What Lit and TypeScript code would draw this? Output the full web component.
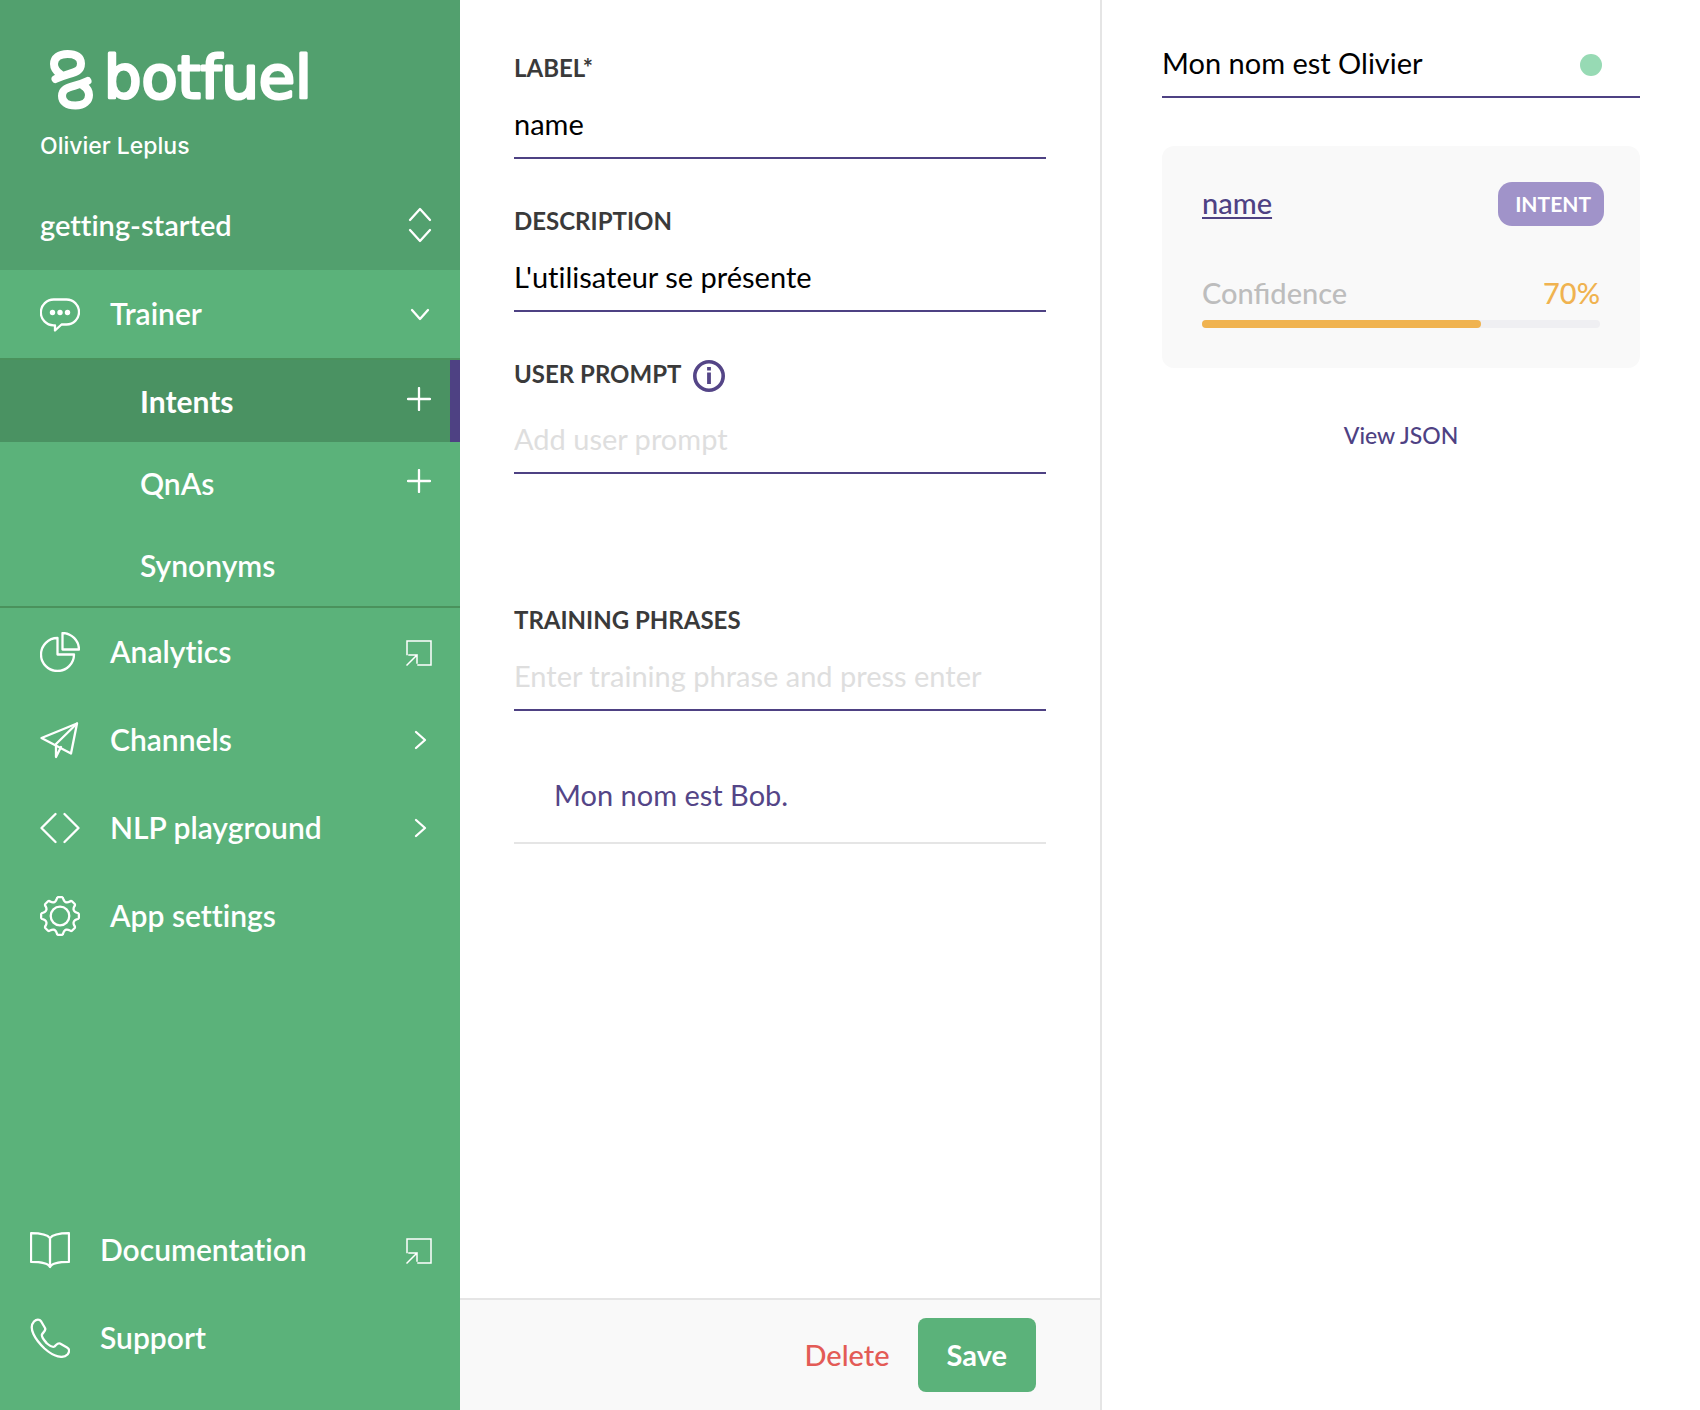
import { LitElement, html, svg, css, nothing, type TemplateResult } from "lit";
import { customElement, state } from "lit/decorators.js";

/** Outline of an eight-toothed cog centred on (20, 20). */
function cogPath(): string {
  const at = (radius: number, degrees: number) => {
    const a = ((degrees - 90) * Math.PI) / 180;
    return `${(20 + radius * Math.cos(a)).toFixed(2)} ${(20 + radius * Math.sin(a)).toFixed(2)}`;
  };
  let d = `M${at(19, -6)}`;
  for (let k = 0; k < 8; k++) {
    const a = k * 45;
    d += `L${at(19, a + 6)}Q${at(18.8, a + 10)} ${at(17, a + 11.5)}`;
    d += `Q${at(15.6, a + 14)} ${at(15, a + 20)}L${at(15, a + 25)}`;
    d += `Q${at(15.6, a + 31)} ${at(17, a + 33.5)}Q${at(18.8, a + 35)} ${at(19, a + 39)}`;
  }
  return d + "Z";
}

const icons: Record<string, TemplateResult> = {
  chat: svg`<path d="M14 5.5h12.5a12.5 12.5 0 0 1 0 25H21.5L15 36.5V31.3H13.5A12.7 12.7 0 0 1 14 5.5z"/>
    <g fill="currentColor" stroke="none"><circle cx="12.5" cy="18.5" r="2.7"/><circle cx="20" cy="18.5" r="2.7"/><circle cx="27.5" cy="18.5" r="2.7"/></g>`,
  pie: svg`<path d="M17.5 6A16.5 16.5 0 1 0 34 22.5H17.5z"/><path d="M22.5 1A16.8 16.8 0 0 1 39 17.5H22.5z"/>`,
  plane: svg`<path d="M37 3.5 1.5 18 31 33.5z"/><path d="M37 3.5 16 24V37L21 27"/>`,
  code: svg`<path d="M15.5 6 1.5 20l14 14M24.5 6l14 14-14 14"/>`,
  cog: svg`<path d=${cogPath()}/><circle cx="20" cy="20" r="9.3"/>`,
  book: svg`<path d="M1 3.2C8 3.2 17 3.8 20 8.2 23 3.8 32 3.2 39 3.2V31.8C32 31.8 22 32.3 20 37 18 32.3 8 31.8 1 31.8zM20 8.2V37"/>`,
  phone: svg`<path d="M4 3.5C6.5 1 9.5 1 11.2 3.5L15 10C16.5 12.8 13 14 12 16.5 11 19 14 22 17 25.5 20.5 28.5 22.5 29.5 24.5 28.5 26.5 27 27.5 24.5 30 25.5L37 29.5C40.5 31.5 39 34.5 37.5 36.5 33 41 24 39 14.5 30.5 5 21.5-2 10 4 3.5z"/>`,
  external: svg`<path stroke-width="1.5" d="M1 14.5V1H25V25H12M1 25 11 15M3 15H11V23"/>`,
  plus: svg`<path d="M12 1v22M1 12h22"/>`,
  down: svg`<path d="M4 8l8 9 8-9"/>`,
  right: svg`<path d="M8 4l9 8-9 8"/>`,
  updown: svg`<path d="M2 13 12 2l10 11M2 23 12 34l10-11"/>`,
};

function icon(name: string, size: "large" | "small" | "box" | "tall") {
  const boxes = { large: "0 0 40 40", small: "0 0 24 24", box: "0 0 26 26", tall: "0 0 24 36" };
  return html`<svg class="icon ${size}" viewBox=${boxes[size]} stroke-width="2.3" aria-hidden="true">${icons[name]}</svg>`;
}

interface NavItem {
  icon: string;
  text: string;
  mark?: "down" | "right" | "external";
}

const mainItems: NavItem[] = [
  { icon: "pie", text: "Analytics", mark: "external" },
  { icon: "plane", text: "Channels", mark: "right" },
  { icon: "code", text: "NLP playground", mark: "right" },
  { icon: "cog", text: "App settings" },
];
const helpItems: NavItem[] = [
  { icon: "book", text: "Documentation", mark: "external" },
  { icon: "phone", text: "Support" },
];
const trainerItems = [
  { text: "Intents", add: true, active: true },
  { text: "QnAs", add: true, active: false },
  { text: "Synonyms", add: false, active: false },
];

@customElement("bot-sidebar")
class BotSidebar extends LitElement {
  static styles = css`
    :host {
      display: flex;
      flex-direction: column;
      background: #5bb27a;
      color: #fff;
      font: 600 30px/36px Lato, "Liberation Sans", sans-serif;
      font-variant-ligatures: none;
    }
    .head {
      box-sizing: border-box;
      height: 270px;
      padding: 38px 26px 0 40px;
      background: #52a06e;
    }
    .logo {
      display: block;
      width: 300px;
      height: 84px;
    }
    .wordmark {
      font: 400 59px "DejaVu Sans", sans-serif;
      font-variant-ligatures: none;
    }
    .user {
      margin: 10px 0 0;
      font: 500 23px/28px Inter, "Liberation Sans", sans-serif;
    }
    .switcher {
      display: flex;
      justify-content: space-between;
      align-items: center;
      width: 100%;
      margin-top: 47px;
      padding: 0 2px 0 0;
      border: 0;
      background: none;
      color: inherit;
      font: inherit;
      font-size: 29px;
      font-variant-ligatures: none;
    }
    .row {
      display: flex;
      align-items: center;
      height: 88px;
      padding: 0 28px 0 40px;
      color: inherit;
      text-decoration: none;
    }
    .row > .large {
      margin-right: 30px;
    }
    .text {
      flex: 1;
      padding-bottom: 2px;
    }
    .group {
      margin: 0;
      padding: 0;
      list-style: none;
      border: solid #4a925c;
      border-width: 2px 0;
    }
    .sub {
      display: flex;
      align-items: center;
      height: 82px;
      box-sizing: border-box;
      padding: 0 29px 0 140px;
    }
    .sub.active {
      border-right: 10px solid #4e4183;
      padding-right: 19px;
      background: #4a9262;
      font-weight: 700;
    }
    .sub a {
      flex: 1;
      color: inherit;
      text-decoration: none;
    }
    .add {
      display: flex;
      padding: 0 0 4px;
      border: 0;
      background: none;
      color: inherit;
    }
    .help {
      margin-top: auto;
      padding-bottom: 28px;
    }
    .help .row {
      padding-left: 30px;
    }
    .icon {
      flex: none;
      fill: none;
      stroke: currentColor;
      stroke-linecap: round;
      stroke-linejoin: round;
    }
    .large {
      width: 40px;
      height: 40px;
    }
    .small {
      width: 24px;
      height: 24px;
    }
    .box {
      width: 26px;
      height: 26px;
      margin-top: 2px;
      stroke-linecap: square;
      stroke-linejoin: miter;
    }
    .tall {
      width: 24px;
      height: 36px;
    }
  `;

  private row(item: NavItem) {
    return html`<a class="row" href="#">
      ${icon(item.icon, "large")}<span class="text">${item.text}</span>
      ${item.mark ? icon(item.mark, item.mark === "external" ? "box" : "small") : nothing}
    </a>`;
  }

  render() {
    return html`
      <header class="head">
        <svg class="logo" viewBox="0 -10 300 84" role="img" aria-label="botfuel">
          <g fill="none" stroke="#fff" stroke-width="8" stroke-linecap="round" stroke-linejoin="round">
            <path d="M15.5 31C30 24 41 26 41 15.5 41 9 36 6 27.5 6 19 6 14 10 14 16 14 20 16 23 20 26"/>
            <path d="M47.5 33C33 40 22 38 22 48 22 54 27 57.5 35.5 57.5 44 57.5 49 53 49 47 49 43 47 40 43 37.5"/>
          </g>
          <text class="wordmark" x="64" y="50" fill="#fff" stroke="#fff" stroke-width="3" stroke-linejoin="round">botfuel</text>
        </svg>
        <p class="user">Olivier Leplus</p>
        <button class="switcher" type="button"><span>getting-started</span>${icon("updown", "tall")}</button>
      </header>
      <nav aria-label="Main">
        ${this.row({ icon: "chat", text: "Trainer", mark: "down" })}
        <ul class="group">
          ${trainerItems.map(
            (item) => html`<li class="sub ${item.active ? "active" : ""}">
              <a href="#">${item.text}</a>
              ${item.add
                ? html`<button class="add" type="button" aria-label="Add ${item.text}">${icon("plus", "small")}</button>`
                : nothing}
            </li>`
          )}
        </ul>
        ${mainItems.map((item) => this.row(item))}
      </nav>
      <nav class="help" aria-label="Help">${helpItems.map((item) => this.row(item))}</nav>
    `;
  }
}

@customElement("intent-form")
class IntentForm extends LitElement {
  static styles = css`
    :host {
      display: flex;
      flex-direction: column;
      font: 400 29px/36px Lato, "Liberation Sans", sans-serif;
    }
    form {
      display: flex;
      flex: 1;
      flex-direction: column;
    }
    .fields {
      flex: 1;
      padding: 52px 54px 0;
    }
    .field {
      display: block;
      margin-bottom: 46px;
    }
    .field.wide {
      margin-bottom: 130px;
    }
    .caption {
      display: flex;
      align-items: center;
      gap: 12px;
      height: 32px;
      color: #3a3a3a;
      font-weight: 700;
      font-size: 24px;
    }
    .tip {
      width: 32px;
      height: 32px;
      margin-top: 4px;
      padding: 0;
      border: 0;
      background: none;
    }
    .tip svg {
      display: block;
    }
    input {
      display: block;
      box-sizing: border-box;
      width: 100%;
      height: 75px;
      padding: 6px 0 0;
      border: 0;
      border-bottom: 2px solid #4e4183;
      border-radius: 0;
      outline: 0;
      background: none;
      color: #000;
      font: inherit;
      font-variant-ligatures: none;
    }
    .tall input {
      height: 84px;
      padding-top: 14px;
    }
    input::placeholder {
      color: #dedede;
      opacity: 1;
    }
    .phrases {
      margin: 0;
      padding: 0;
      list-style: none;
    }
    .phrase {
      padding: 20px 40px 29px;
      border-bottom: 2px solid #e5e5e5;
      color: #544587;
    }
    .actions {
      display: flex;
      justify-content: flex-end;
      gap: 28px;
      padding: 18px 64px 18px 0;
      border-top: 2px solid #e5e5e5;
      background: #f9f9f9;
    }
    .actions button {
      height: 74px;
      padding: 0;
      border: 0;
      background: none;
      color: #e35b56;
      font: inherit;
      font-weight: 500;
    }
    .actions .save {
      padding: 0 29px;
      border-radius: 8px;
      background: #5bb27a;
      color: #fff;
      font-weight: 700;
    }
  `;

  @state() private phrases = ["Mon nom est Bob."];

  render() {
    return html`<form @submit=${(e: Event) => e.preventDefault()}>
      <div class="fields">
        <div class="field">
          <label class="caption" for="label">LABEL*</label>
          <input id="label" type="text" .value=${"name"} />
        </div>
        <div class="field">
          <label class="caption" for="description">DESCRIPTION</label>
          <input id="description" type="text" .value=${"L'utilisateur se présente"} />
        </div>
        <div class="field tall wide">
          <div class="caption">
            <label for="prompt">USER PROMPT</label>
            <button class="tip" type="button" aria-label="About user prompts">
              <svg viewBox="0 0 32 32" width="32" height="32" fill="none" stroke="#544587">
                <circle cx="16" cy="16" r="14.2" stroke-width="3.6" />
                <path d="M16 12.5v11.5M16 7v3.6" stroke-width="3.8" />
              </svg>
            </button>
          </div>
          <input id="prompt" type="text" placeholder="Add user prompt" />
        </div>
        <div class="field">
          <label class="caption" for="phrase">TRAINING PHRASES</label>
          <input id="phrase" type="text" placeholder="Enter training phrase and press enter" />
        </div>
        <ul class="phrases">
          ${this.phrases.map((p) => html`<li class="phrase">${p}</li>`)}
        </ul>
      </div>
      <footer class="actions">
        <button type="button">Delete</button>
        <button class="save" type="submit">Save</button>
      </footer>
    </form>`;
  }
}

@customElement("intent-preview")
class IntentPreview extends LitElement {
  static styles = css`
    :host {
      display: block;
      box-sizing: border-box;
      padding: 24px 60px;
      border-left: 2px solid #e5e5e5;
      font: 400 29px/36px Lato, "Liberation Sans", sans-serif;
    }
    .query {
      display: flex;
      align-items: center;
      box-sizing: border-box;
      height: 74px;
      padding: 6px 38px 0 0;
      border-bottom: 2px solid #4e4183;
    }
    .query input {
      flex: 1;
      min-width: 0;
      padding: 0;
      border: 0;
      outline: 0;
      background: none;
      color: #000;
      font: inherit;
    }
    .dot {
      width: 22px;
      height: 22px;
      margin-top: 4px;
      border-radius: 50%;
      background: #97dab4;
    }
    .card {
      margin: 48px 0 49px;
      padding: 36px 40px 40px;
      border-radius: 12px;
      background: #f9f9f9;
      font-weight: 500;
    }
    .line {
      display: flex;
      justify-content: space-between;
      align-items: center;
    }
    .name {
      padding-bottom: 2px;
      color: #4e4183;
      text-decoration: underline 2px;
      text-underline-offset: 3px;
    }
    .badge {
      margin-right: -4px;
      padding: 0 13px 0 17px;
      border-radius: 14px;
      background: #a093c9;
      color: #fff;
      font-weight: 700;
      font-size: 21px;
      line-height: 44px;
    }
    .score {
      margin-top: 49px;
      color: #bdbdbd;
    }
    .value {
      color: #f0b350;
    }
    .track {
      height: 8px;
      margin-top: 9px;
      border-radius: 4px;
      background: #efeff2;
    }
    .fill {
      height: 8px;
      border-radius: 4px;
      background: #f0b350;
    }
    .json {
      display: block;
      margin: 0 auto;
      padding: 0;
      border: 0;
      background: none;
      color: #4e4183;
      font: inherit;
      font-weight: 500;
      font-size: 23px;
    }
  `;

  @state() private confidence = 70;

  render() {
    return html`
      <div class="query">
        <input type="text" aria-label="Test phrase" .value=${"Mon nom est Olivier"} />
        <span class="dot"></span>
      </div>
      <section class="card">
        <div class="line"><a class="name" href="#">name</a><span class="badge">INTENT</span></div>
        <div class="line score"><span>Confidence</span><span class="value">${this.confidence}%</span></div>
        <div class="track"><div class="fill" style="width:${this.confidence}%"></div></div>
      </section>
      <button class="json" type="button">View JSON</button>
    `;
  }
}

@customElement("app-root")
class AppRoot extends LitElement {
  static styles = css`
    :host {
      display: grid;
      grid-template-columns: 460px minmax(0, 16fr) minmax(0, 15fr);
      min-height: 100vh;
      background: #fff;
    }
  `;

  render() {
    return html`<bot-sidebar></bot-sidebar><intent-form></intent-form><intent-preview></intent-preview>`;
  }
}
